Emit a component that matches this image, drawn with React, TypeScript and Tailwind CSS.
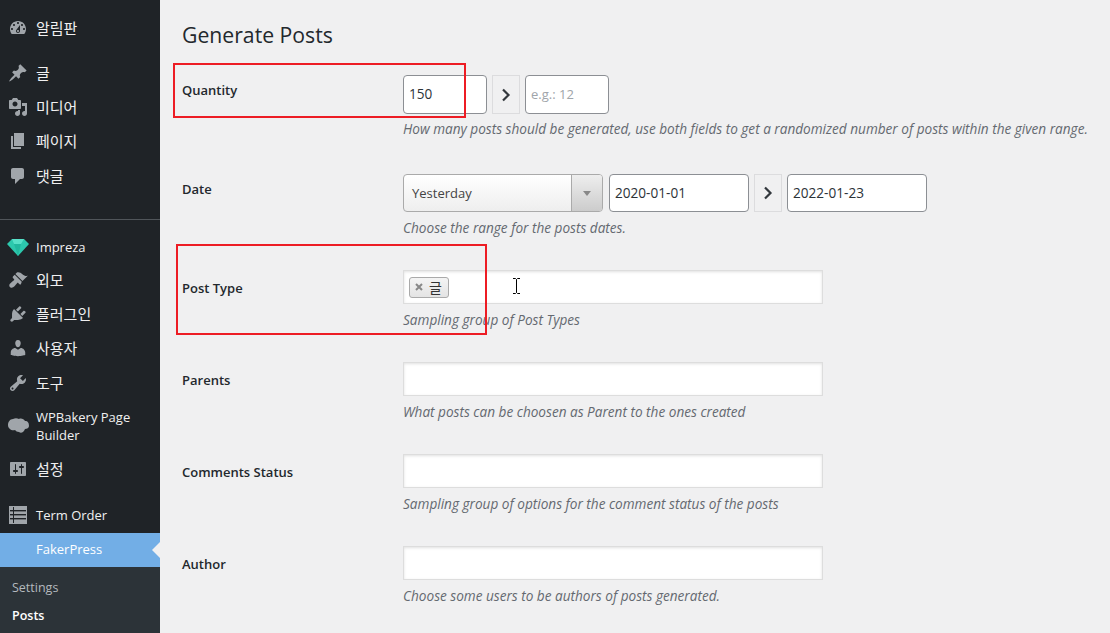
import type { ReactNode } from "react";

const font = "font-['Open_Sans','Noto_Sans_CJK_KR',sans-serif]";

const paths: Record<string, string> = {
	dashboard:
		"M3.76 16h12.48c1.1-1.37 1.76-3.11 1.76-5 0-4.42-3.58-8-8-8s-8 3.58-8 8c0 1.89.66 3.63 1.76 5zM10 4c.55 0 1 .45 1 1s-.45 1-1 1-1-.45-1-1 .45-1 1-1zM6 6c.55 0 1 .45 1 1s-.45 1-1 1-1-.45-1-1 .45-1 1-1zm8 0c.55 0 1 .45 1 1s-.45 1-1 1-1-.45-1-1 .45-1 1-1zm-5.37 5.55L12 7v6c0 1.1-.9 2-2 2s-2-.9-2-2c0-.57.24-1.08.63-1.45zM4 10c.55 0 1 .45 1 1s-.45 1-1 1-1-.45-1-1 .45-1 1-1zm12 0c.55 0 1 .45 1 1s-.45 1-1 1-1-.45-1-1 .45-1 1-1zm-5 3c0-.55-.45-1-1-1s-1 .45-1 1 .45 1 1 1 1-.45 1-1z",
	post: "M10.44 3.02l1.82-1.82 6.36 6.35-1.83 1.82c-1.05-.68-2.48-.57-3.41.36l-.75.75c-.92.93-1.04 2.35-.35 3.41l-1.83 1.82-2.41-2.41-2.8 2.79c-.42.42-3.38 2.71-3.8 2.29s1.86-3.39 2.28-3.81l2.79-2.79L4.1 9.36l1.83-1.82c1.05.69 2.48.57 3.4-.36l.75-.75c.93-.92 1.05-2.35.36-3.41z",
	media:
		"M13 11V4c0-.55-.45-1-1-1h-1.67L9 1H5L3.67 3H2c-.55 0-1 .45-1 1v7c0 .55.45 1 1 1h10c.55 0 1-.45 1-1zM7 4.5c1.38 0 2.5 1.12 2.5 2.5S8.38 9.5 7 9.5 4.5 8.38 4.5 7 5.62 4.5 7 4.5zM14 6h5v10.5c0 1.38-1.12 2.5-2.5 2.5S14 17.88 14 16.5s1.12-2.5 2.5-2.5c.17 0 .34.02.5.05V9h-3V6zm-4 8.05V13h2v3.5c0 1.38-1.12 2.5-2.5 2.5S7 17.88 7 16.5 8.12 14 9.5 14c.17 0 .34.02.5.05z",
	page: "M6 15V2h10v13H6zm-1 1h8v2H3V5h2v11z",
	comments:
		"M5 2h9c1.1 0 2 .9 2 2v7c0 1.1-.9 2-2 2h-2l-5 5v-5H5c-1.1 0-2-.9-2-2V4c0-1.1.9-2 2-2z",
	appearance:
		"M14.48 11.06L7.41 3.99l1.5-1.5c.5-.56 2.3-.47 3.51.32 1.21.8 1.43 1.28 2.91 2.1 1.18.64 2.45 1.26 4.45.85zm-.71.71L6.7 4.7 4.93 6.47c-.39.39-.39 1.02 0 1.41l1.06 1.06c.39.39.39 1.03 0 1.42-.6.6-1.43 1.11-2.21 1.69-.35.26-.7.53-1.01.84C1.43 13.71.96 15.12 1.5 16.5c.2.5.5.8 1 1 1.38.54 2.79.07 3.99-1.13.31-.31.58-.66.84-1.01.58-.78 1.09-1.61 1.69-2.21.39-.39 1.03-.39 1.42 0l1.06 1.06c.39.39 1.02.39 1.41 0z",
	plugins:
		"M13.11 4.36L9.87 7.6 8 5.73l3.24-3.24c.35-.34 1.05-.2 1.56.32.52.51.66 1.21.31 1.55zm-8 1.77l.91-1.12 9.01 9.01-1.19.84c-.71.71-2.63 1.16-3.82 1.16H6.14L4.9 17.26c-.59.59-1.54.59-2.12 0-.59-.58-.59-1.53 0-2.12l1.24-1.24v-3.88c0-1.13.4-3.19 1.09-3.89zm7.26 3.97l3.24-3.24c.34-.35 1.04-.21 1.55.31.52.51.66 1.21.31 1.55l-3.24 3.25z",
	users:
		"M10 9.25c-2.27 0-2.73-3.44-2.73-3.44C7 4.02 7.82 2 9.97 2c2.16 0 2.98 2.02 2.71 3.81 0 0-.41 3.44-2.68 3.44zm0 2.57L12.72 10c2.39 0 4.52 2.33 4.52 4.53v2.49s-3.65 1.13-7.24 1.13c-3.65 0-7.24-1.13-7.24-1.13v-2.49c0-2.25 1.94-4.48 4.47-4.48z",
	tools:
		"M16.68 9.77c-1.34 1.34-3.3 1.67-4.95.99l-5.41 6.52c-.99.99-2.59.99-3.58 0s-.99-2.59 0-3.57l6.52-5.42c-.68-1.65-.35-3.61.99-4.95 1.28-1.28 3.12-1.62 4.72-1.06l-2.89 2.89 2.82 2.82 2.86-2.87c.53 1.58.18 3.39-1.08 4.65zM3.81 16.21c.4.39 1.04.39 1.43 0 .4-.4.4-1.04 0-1.43-.39-.4-1.03-.4-1.43 0-.39.39-.39 1.03 0 1.43z",
	settings:
		"M18 16V4c0-.55-.45-1-1-1H3c-.55 0-1 .45-1 1v12c0 .55.45 1 1 1h14c.55 0 1-.45 1-1zM8 11h1c.55 0 1 .45 1 1s-.45 1-1 1H8v1.5c0 .28-.22.5-.5.5s-.5-.22-.5-.5V13H6c-.55 0-1-.45-1-1s.45-1 1-1h1V5.5c0-.28.22-.5.5-.5s.5.22.5.5V11zm5-2h-1c-.55 0-1-.45-1-1s.45-1 1-1h1V5.5c0-.28.22-.5.5-.5s.5.22.5.5V7h1c.55 0 1 .45 1 1s-.45 1-1 1h-1v5.5c0 .28-.22.5-.5.5s-.5-.22-.5-.5V9z",
};

function Dashicon({ name }: { name: string }) {
	return (
		<svg viewBox="0 0 20 20" className="size-5 fill-[#a0a5aa]">
			<path d={paths[name]} />
		</svg>
	);
}

function Gem() {
	return (
		<svg viewBox="0 0 22 17" className="h-[17px] w-[22px]">
			<path d="M5 0h12l5 5-11 12L0 5z" fill="#2cc8ad" />
			<path d="M5 0h12l-3 5H7z" fill="#57e0c8" />
			<path d="M7 5h7l-3 12z" fill="#22b89f" />
		</svg>
	);
}

function Cloud() {
	return (
		<svg viewBox="0 0 21 16" className="h-4 w-[21px] fill-[#a0a5aa]">
			<path d="M5 1c2-1 4-1 6 0 2-1 5 0 6 2 3 0 4 2 4 5 0 2-2 3-4 3-1 3-4 5-6 3-2 0-3-1-4-2-3 1-7-1-7-5 0-3 2-6 5-6z" />
		</svg>
	);
}

function ListIcon() {
	return (
		<svg viewBox="0 0 18 18" className="size-[18px]">
			<rect width="18" height="18" fill="#a0a5aa" />
			<g fill="#1f2327">
				<rect x="4" y="1" width="1" height="16" />
				<rect x="1" y="4" width="16" height="1.4" />
				<rect x="1" y="8" width="16" height="1.4" />
				<rect x="1" y="12" width="16" height="1.4" />
			</g>
		</svg>
	);
}

function MenuItem({
	icon,
	children,
	ko = false,
	className = "h-[34.4px]",
}: {
	icon: ReactNode;
	children: ReactNode;
	ko?: boolean;
	className?: string;
}) {
	return (
		<div
			className={`flex items-center leading-[18px] text-[#f0f0f1] ${ko ? "text-[15px]" : "text-[13px]"} ${className}`}
		>
			<div className="flex w-9 shrink-0 justify-center">{icon}</div>
			<div>{children}</div>
		</div>
	);
}

function Sidebar() {
	return (
		<aside className="flex w-40 shrink-0 flex-col bg-[#1f2327] pt-[11px]">
			<MenuItem ko icon={<Dashicon name="dashboard" />}>알림판</MenuItem>
			<div className="h-[10px]" />
			<MenuItem ko icon={<Dashicon name="post" />}>글</MenuItem>
			<MenuItem ko icon={<Dashicon name="media" />}>미디어</MenuItem>
			<MenuItem ko icon={<Dashicon name="page" />}>페이지</MenuItem>
			<MenuItem ko icon={<Dashicon name="comments" />}>댓글</MenuItem>
			<div className="mt-[26px] mb-[10px] h-px bg-[#50555a]" />
			<MenuItem icon={<Gem />} className="h-[32.4px] pt-[2px]">
				Impreza
			</MenuItem>
			<MenuItem ko icon={<Dashicon name="appearance" />}>외모</MenuItem>
			<MenuItem ko icon={<Dashicon name="plugins" />}>플러그인</MenuItem>
			<MenuItem ko icon={<Dashicon name="users" />}>사용자</MenuItem>
			<MenuItem ko icon={<Dashicon name="tools" />}>도구</MenuItem>
			<MenuItem icon={<Cloud />} className="h-[52px]">
				WPBakery Page
				<br />
				Builder
			</MenuItem>
			<MenuItem ko icon={<Dashicon name="settings" />}>설정</MenuItem>
			<div className="h-[12px]" />
			<MenuItem icon={<ListIcon />}>Term Order</MenuItem>
			<div className="relative flex h-[34px] items-center bg-[#72aee6] pl-9 text-[13px] text-white">
				FakerPress
				<div className="absolute top-[9px] right-0 size-0 border-y-[8px] border-r-[8px] border-y-transparent border-r-[#f0f0f1]" />
			</div>
			<div className="flex-1 bg-[#2c3338] pt-[7px] pl-3 text-[12.5px] leading-[28px]">
				<div className="text-[#b4b9be]">Settings</div>
				<div className="font-semibold text-white">Posts</div>
			</div>
		</aside>
	);
}

function Field({
	label,
	description,
	children,
	labelClass = "pt-[8px]",
	className = "pb-8",
	descClass = "mt-[6px]",
}: {
	label: string;
	description: string;
	children: ReactNode;
	labelClass?: string;
	className?: string;
	descClass?: string;
}) {
	return (
		<div className={`flex ${className}`}>
			<div className={`w-[221px] shrink-0 text-[13px] leading-5 font-semibold text-[#23282d] ${labelClass}`}>
				{label}
			</div>
			<div>
				{children}
				<p className={`text-[13.6px] leading-5 whitespace-nowrap text-[#646970] italic ${descClass}`}>
					{description}
				</p>
			</div>
		</div>
	);
}

function TextBox({
	value,
	placeholder,
	className,
}: {
	value?: string;
	placeholder?: string;
	className: string;
}) {
	return (
		<div
			className={`flex items-center rounded-[4px] border border-[#8c8f94] bg-white pl-[5px] ${value ? "text-[13.6px] text-[#2c3338]" : "text-[13px] text-[#a0a5aa]"} ${className}`}
		>
			{value ?? placeholder}
		</div>
	);
}

function ArrowButton() {
	return (
		<div className="flex w-[28px] items-center justify-center border border-[#dcdcde] bg-[#f0f0f1]">
			<svg viewBox="0 0 10 14" className="h-[14px] w-[10px] fill-none stroke-[#32373c] stroke-[2.2]">
				<path d="M2 1.5 7.5 7 2 12.5" />
			</svg>
		</div>
	);
}

function TagBox({ children }: { children?: ReactNode }) {
	return (
		<div className="flex h-[34px] w-[420px] items-center border border-[#dddddd] bg-white pl-[5px] shadow-[inset_0_1px_3px_rgba(0,0,0,0.12)]">
			{children}
		</div>
	);
}

function Form() {
	return (
		<main className={`relative min-w-0 flex-1 pl-[22px] ${font}`}>
			<h1 className="pt-[20px] pb-[25px] text-[21.2px] leading-[30px] font-normal text-[#23282d]">
				Generate Posts
			</h1>
			<Field
				label="Quantity"
				description="How many posts should be generated, use both fields to get a randomized number of posts within the given range."
				labelClass="pt-[5px]"
				className="pb-[35px]"
				descClass="mt-[5px]"
			>
				<div className="flex h-[39px] gap-[5px]">
					<TextBox value="150" className="w-[84px]" />
					<ArrowButton />
					<TextBox placeholder="e.g.: 12" className="w-[84px]" />
				</div>
			</Field>
			<Field label="Date" description="Choose the range for the posts dates." labelClass="pt-[5px]">
				<div className="flex h-[38px] gap-[5px]">
					<div className="mr-px flex w-[200px] overflow-hidden rounded-[4px] border border-[#aaaaaa] bg-gradient-to-b from-white to-[#eeeeee] text-[13px] text-[#444444]">
						<div className="flex flex-1 items-center pt-px pl-2">Yesterday</div>
						<div className="flex w-[31px] items-center justify-center border-l border-[#aaaaaa] bg-gradient-to-b from-[#eeeeee] to-[#cccccc]">
							<div className="size-0 border-x-[4px] border-t-[5px] border-x-transparent border-t-[#888888]" />
						</div>
					</div>
					<TextBox value="2020-01-01" className="w-[140px]" />
					<ArrowButton />
					<TextBox value="2022-01-23" className="w-[140px]" />
				</div>
			</Field>
			<Field label="Post Type" description="Sampling group of Post Types">
				<TagBox>
					<div className="flex h-[21px] items-center gap-[6px] rounded-[3px] border border-[#aaaaaa] bg-gradient-to-b from-[#f4f4f4] to-[#e4e4e4] pr-[6px] pl-[5px] text-[14px] text-[#333333]">
						<svg viewBox="0 0 8 8" className="size-2 stroke-[#888888] stroke-2">
							<path d="M1 1l6 6M7 1L1 7" />
						</svg>
						글
					</div>
				</TagBox>
			</Field>
			<Field label="Parents" description="What posts can be choosen as Parent to the ones created">
				<TagBox />
			</Field>
			<Field label="Comments Status" description="Sampling group of options for the comment status of the posts">
				<TagBox />
			</Field>
			<Field label="Author" description="Choose some users to be authors of posts generated.">
				<TagBox />
			</Field>

			{/* annotation boxes drawn over the form */}
			<div className="absolute top-[63px] left-[13px] h-[55px] w-[293px] border-2 border-[#ed1c24]" />
			<div className="absolute top-[244px] left-[16px] h-[91px] w-[311px] border-2 border-[#ed1c24]" />
			<svg viewBox="0 0 9 16" className="absolute top-[278px] left-[352px] h-4 w-[9px] fill-none stroke-black">
				<path d="M1 .5h2.5l1 1 1-1H8M4.5 1.5v13M1 15.5h2.5l1-1 1 1H8" />
			</svg>
		</main>
	);
}

export default function App() {
	return (
		<div className={`flex h-[633px] w-[1110px] overflow-hidden bg-[#f0f0f1] ${font}`}>
			<Sidebar />
			<Form />
		</div>
	);
}
